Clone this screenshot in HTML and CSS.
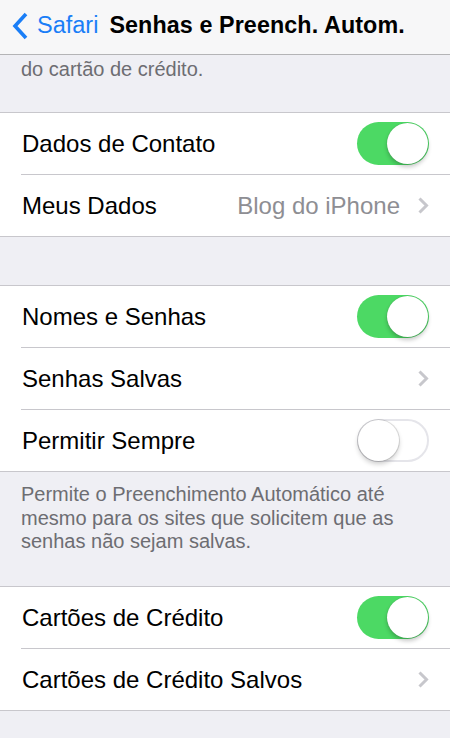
FILE: index.html
```html
<!DOCTYPE html>
<html lang="pt">
<head>
<meta charset="utf-8">
<title>Senhas e Preench. Autom.</title>
<link rel="stylesheet" href="styles.css">
</head>
<body>
<div class="screen">
  <header class="nav">
    <div class="back">
      <svg class="back-icon" width="16" height="28" viewBox="0 0 16 28"><path d="M14 2 L3 14 L14 26" fill="none" stroke="#1a7ef7" stroke-width="3.6" stroke-linecap="butt" stroke-linejoin="miter"/></svg>
      <span class="back-label">Safari</span>
    </div>
    <h1 class="title">Senhas e Preench. Autom.</h1>
  </header>

  <p class="footer footer-top">do cartão de crédito.</p>

  <section class="group">
    <div class="row">
      <span class="label">Dados de Contato</span>
      <span class="switch on"><span class="knob"></span></span>
    </div>
    <div class="row">
      <span class="label">Meus Dados</span>
      <span class="value">Blog do iPhone</span>
      <svg class="chev" width="11" height="17" viewBox="0 0 11 17"><path d="M1.5 1.5 L8.5 8.5 L1.5 15.5" fill="none" stroke="#c7c7cc" stroke-width="3"/></svg>
    </div>
  </section>

  <div class="spacer"></div>

  <section class="group">
    <div class="row">
      <span class="label">Nomes e Senhas</span>
      <span class="switch on"><span class="knob"></span></span>
    </div>
    <div class="row">
      <span class="label">Senhas Salvas</span>
      <svg class="chev" width="11" height="17" viewBox="0 0 11 17"><path d="M1.5 1.5 L8.5 8.5 L1.5 15.5" fill="none" stroke="#c7c7cc" stroke-width="3"/></svg>
    </div>
    <div class="row">
      <span class="label">Permitir Sempre</span>
      <span class="switch off"><span class="knob"></span></span>
    </div>
  </section>

  <p class="footer footer-mid">Permite o Preenchimento Automático até mesmo para os sites que solicitem que as senhas não sejam salvas.</p>

  <section class="group">
    <div class="row">
      <span class="label">Cartões de Crédito</span>
      <span class="switch on"><span class="knob"></span></span>
    </div>
    <div class="row">
      <span class="label">Cartões de Crédito Salvos</span>
      <svg class="chev" width="11" height="17" viewBox="0 0 11 17"><path d="M1.5 1.5 L8.5 8.5 L1.5 15.5" fill="none" stroke="#c7c7cc" stroke-width="3"/></svg>
    </div>
  </section>
</div>
</body>
</html>
```

FILE: styles.css
```css
html, body {
  margin: 0;
  padding: 0;
  background: #efeff4;
}
body {
  font-family: "Liberation Sans", Arial, sans-serif;
  width: 450px;
  height: 738px;
  overflow: hidden;
}
.screen {
  display: flex;
  flex-direction: column;
}
.nav {
  background: #f7f7f8;
  border-bottom: 1px solid #b4b4b6;
  display: flex;
  align-items: center;
  padding: 0 0 3px 12px;
  box-sizing: border-box;
  height: 55px;
}
.back {
  display: flex;
  align-items: center;
  gap: 9px;
  margin-right: 11px;
}
.back-icon {
  display: block;
}
.back-label {
  font-size: 23.5px;
  color: #1a7ef7;
}
.title {
  margin: 0;
  font-size: 23.3px;
  font-weight: bold;
  color: #000;
  letter-spacing: 0.1px;
}
.footer {
  margin: 0;
  color: #6d6d72;
  font-size: 20px;
  line-height: 23.5px;
  padding-left: 21px;
  padding-right: 20px;
}
.footer-top {
  padding-top: 3px;
  height: 57px;
  box-sizing: border-box;
}
.footer-mid {
  padding-top: 11px;
  height: 114px;
  box-sizing: border-box;
}
.group {
  background: #fff;
  border-top: 1px solid #c8c7cc;
  border-bottom: 1px solid #c8c7cc;
  padding-left: 21px;
}
.row {
  height: 61px;
  display: flex;
  align-items: center;
  padding-right: 21px;
  border-top: 1px solid #c8c7cc;
}
.row:first-child {
  border-top: none;
}
.label {
  flex: 1;
  font-size: 24px;
  color: #000;
  padding-left: 1px;
}
.value {
  font-size: 24px;
  color: #8e8e93;
  margin-right: 18px;
}
.chev {
  display: block;
}
.spacer {
  height: 48px;
}
.switch {
  position: relative;
  width: 72px;
  height: 43px;
  border-radius: 22px;
  box-sizing: border-box;
  flex: none;
}
.switch.on {
  background: #4cd964;
}
.switch.off {
  background: #fff;
  border: 2px solid #e5e5ea;
}
.knob {
  position: absolute;
  width: 41px;
  height: 41px;
  border-radius: 50%;
  background: #fff;
  box-shadow: 0 3px 4px rgba(0,0,0,0.22), 0 0 1px rgba(0,0,0,0.25);
}
.switch.on .knob {
  top: 1px;
  right: 1px;
}
.switch.off .knob {
  top: -1px;
  left: -1px;
  box-shadow: 0 3px 5px rgba(0,0,0,0.2), 0 0 0 1px rgba(0,0,0,0.12);
}
```
